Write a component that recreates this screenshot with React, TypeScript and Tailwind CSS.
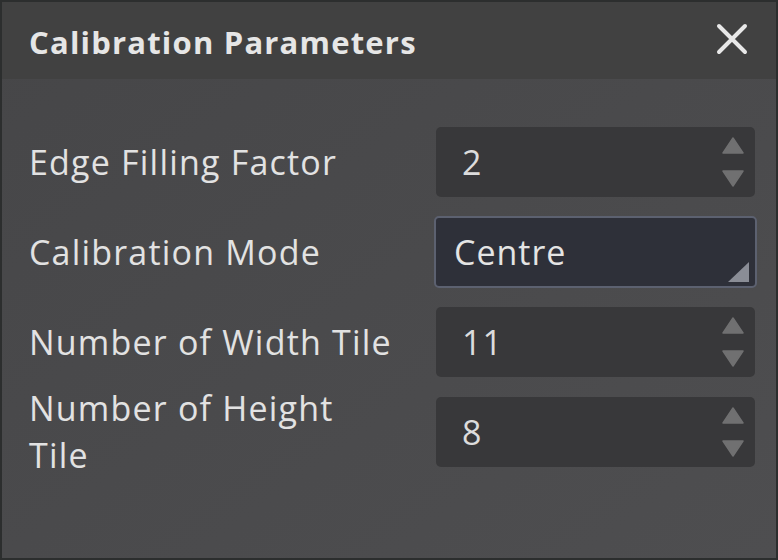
import React, { useState } from 'react';

interface SpinRowProps {
  label: string;
  value: string;
}

function Spinner({ value }: { value: string }) {
  return (
    <div className="flex h-[70px] items-center justify-between rounded-[5px] bg-[#38383a] pl-[26px] pr-[11px]">
      <span className="text-[34px] tracking-[1px] text-[#dcdcdc]">{value}</span>
      <div className="flex flex-col items-center gap-[16px]">
        <svg width="22" height="17" viewBox="0 0 22 17">
          <path d="M11 1 L21 16 L1 16 Z" fill="#707071" stroke="#707071" strokeWidth="1.5" strokeLinejoin="round" />
        </svg>
        <svg width="22" height="17" viewBox="0 0 22 17">
          <path d="M1 1 L21 1 L11 16 Z" fill="#707071" stroke="#707071" strokeWidth="1.5" strokeLinejoin="round" />
        </svg>
      </div>
    </div>
  );
}

function Row({ label, children }: { label: string; children: React.ReactNode }) {
  return (
    <div className="grid h-[70px] grid-cols-[407px_1fr] grid-rows-[70px] items-center">
      <div className="max-w-[374px] text-[34px] leading-[47px] tracking-[1.2px] text-[#e2e2e2]">{label}</div>
      {children}
    </div>
  );
}

export default function App() {
  const [mode] = useState('Centre');
  const rows: SpinRowProps[] = [
    { label: 'Number of Width Tile', value: '11' },
    { label: 'Number of Height Tile', value: '8' },
  ];

  return (
    <div
      className="flex h-[560px] w-[778px] flex-col border-2 border-[#2c2e2e] bg-gradient-to-br from-[#464648] to-[#4e4e50]"
      style={{ fontFamily: '"Open Sans", "Noto Sans", sans-serif' }}
    >
      <div className="flex h-[77px] shrink-0 items-center justify-between bg-[#414141] pl-[27px] pr-[28px] pt-[3px]">
        <span className="text-[31px] font-bold tracking-[1.2px] text-[#e6e6e6]">Calibration Parameters</span>
        <svg className="-mt-[6px]" width="32" height="32" viewBox="0 0 32 32">
          <path d="M3 3 L29 29 M29 3 L3 29" stroke="#e8e8e8" strokeWidth="4" strokeLinecap="round" />
        </svg>
      </div>

      <div className="flex flex-col gap-[20px] pl-[27px] pr-[21px] pt-[48px]">
        <Row label="Edge Filling Factor">
          <Spinner value="2" />
        </Row>
        <Row label="Calibration Mode">
          <div className="relative -mx-[2px] flex h-[72px] items-center rounded-[5px] border-2 border-[#5c6170] bg-[#2e3039] pl-[18px]">
            <span className="text-[34px] tracking-[1px] text-[#e4e4e4]">{mode}</span>
            <svg className="absolute bottom-[4px] right-[5px]" width="22" height="20" viewBox="0 0 22 20">
              <path d="M21 0 L21 20 L0 20 Z" fill="#8a8d96" />
            </svg>
          </div>
        </Row>
        {rows.map((r) => (
          <Row key={r.label} label={r.label}>
            <Spinner value={r.value} />
          </Row>
        ))}
      </div>
    </div>
  );
}
